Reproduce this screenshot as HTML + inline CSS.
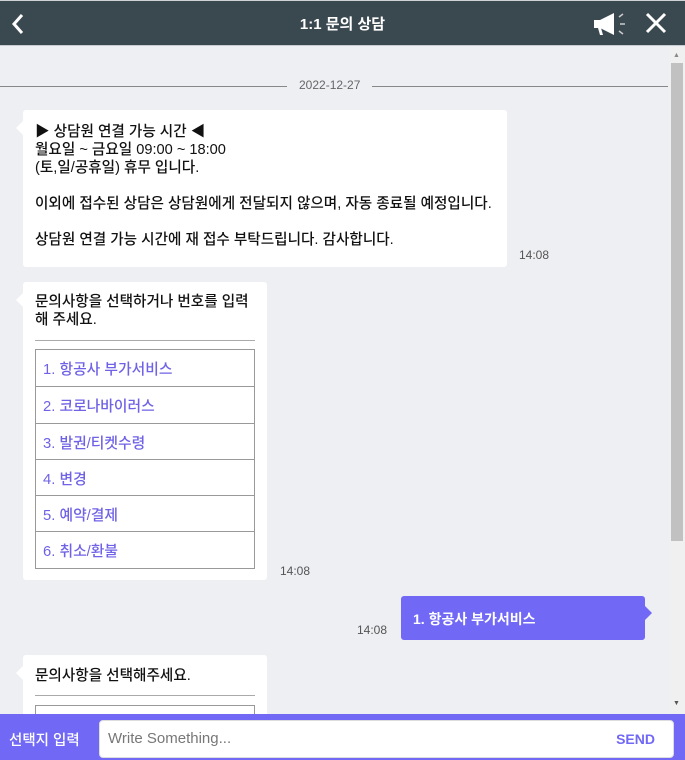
<!DOCTYPE html>
<html><head><meta charset="utf-8"><style>
*{margin:0;padding:0;box-sizing:border-box}
body{width:685px;height:760px;overflow:hidden;background:#eeeff3;font-family:"Liberation Sans","Noto Sans CJK KR",sans-serif;position:relative;color:#222}
.hdr{position:absolute;left:0;top:0;width:685px;height:46px;background:#3a4850;border-top:1px solid #cfd3d6;border-bottom:1px solid #c8ccd0}
.hdr .t{position:absolute;left:0;right:0;top:12px;text-align:center;color:#fff;font-size:15px;font-weight:bold}
.sb{position:absolute;left:669px;top:47px;width:16px;height:667px;background:#f0f0f0}
.thumb{position:absolute;left:671px;top:63px;width:12px;height:478px;background:#c1c1c1}
.date{position:absolute;top:86px;left:0;width:668px;height:1px;background:#888}
.dtxt{position:absolute;top:78px;left:287px;background:#eeeff3;padding:0 12px;font-size:12px;color:#666}
.b{position:absolute;background:#fff;border-radius:3px;font-size:14.6px;line-height:18px;color:#111;font-weight:500}
.b:before{content:"";position:absolute;left:-7px;top:11px;border:7px solid transparent;border-left:0;border-right-color:#fff}
.tm{position:absolute;font-size:12px;color:#555}
.lst{position:absolute;left:35px;top:349px;width:220px;border:1px solid #999}
.lst div{height:36.3px;border-top:1px solid #999;color:#6f62e6;font-size:14.8px;padding:8px 7px;font-weight:500}
.lst div:first-child{border-top:0}
.me{position:absolute;left:401px;top:596px;width:244px;height:44px;background:#7168f6;border-radius:3px;color:#fff;font-size:14px;font-weight:bold;padding:13px 12px}
.me:after{content:"";position:absolute;right:-7px;top:10px;border:7px solid transparent;border-right:0;border-left-color:#7168f6}
.ft{position:absolute;left:0;top:714px;width:685px;height:46px;background:#7168f6}
.inp{position:absolute;left:99px;top:720px;width:575px;height:38px;background:#fff;border-radius:4px;border:1px solid #ddd}
</style></head><body>
<div class="hdr">
<svg style="position:absolute;left:10px;top:12px" width="16" height="22" viewBox="0 0 16 22"><path d="M12 2 L4 11 L12 20" stroke="#fff" stroke-width="3" fill="none"/></svg>
<div class="t">1:1 문의 상담</div>
<svg style="position:absolute;left:592px;top:10px" width="38" height="26" viewBox="0 0 38 26"><path d="M2 9 h6 l14 -7 v22 l-14 -7 h-6z" fill="#fff"/><path d="M6 17 l2 7 h3 l-2 -7z" fill="#fff"/><path d="M27 6 l4 -3 M28 13 h5 M27 20 l4 3" stroke="#ccc" stroke-width="1.5"/></svg>
<svg style="position:absolute;left:645px;top:11px" width="22" height="22" viewBox="0 0 22 22"><path d="M2 2 L20 20 M20 2 L2 20" stroke="#fff" stroke-width="3"/></svg>
</div>
<div class="sb"></div><div class="thumb"></div>
<div style="position:absolute;left:673px;top:52px;font-size:7px;color:#888">▲</div>
<div style="position:absolute;left:673px;top:700px;font-size:7px;color:#555">▼</div>
<div class="date"></div><div class="dtxt">2022-12-27</div>
<div class="b" style="left:23px;top:110px;width:484px;height:157px;padding:13px 12px">▶ 상담원 연결 가능 시간 ◀<br>월요일 ~ 금요일 09:00 ~ 18:00<br>(토,일/공휴일) 휴무 입니다.<br><br>이외에 접수된 상담은 상담원에게 전달되지 않으며, 자동 종료될 예정입니다.<br><br>상담원 연결 가능 시간에 재 접수 부탁드립니다. 감사합니다.</div>
<div class="tm" style="left:519px;top:248px">14:08</div>
<div class="b" style="left:23px;top:282px;width:244px;height:298px;padding:11px 12px">문의사항을 선택하거나 번호를 입력<br>해 주세요.<div style="position:absolute;left:12px;top:58px;width:220px;height:1px;background:#aaa"></div></div>
<div class="lst"><div>1. 항공사 부가서비스</div><div>2. 코로나바이러스</div><div>3. 발권/티켓수령</div><div>4. 변경</div><div>5. 예약/결제</div><div>6. 취소/환불</div></div>
<div class="tm" style="left:280px;top:564px">14:08</div>
<div class="me">1. 항공사 부가서비스</div>
<div class="tm" style="left:357px;top:623px">14:08</div>
<div class="b" style="left:23px;top:655px;width:244px;height:70px;padding:12px 12px">문의사항을 선택해주세요.<div style="position:absolute;left:12px;top:40px;width:220px;height:1px;background:#aaa"></div><div style="position:absolute;left:12px;top:50px;width:220px;height:30px;border:1px solid #999"></div></div>
<div class="ft"><div style="position:absolute;left:9px;top:15px;color:#fff;font-size:14.5px;font-weight:500">선택지 입력</div></div>
<div class="inp"><span style="position:absolute;left:8px;top:9px;font-size:15px;color:#777">Write Something...</span><span style="position:absolute;right:18px;top:10px;font-size:14px;font-weight:bold;color:#7168f6">SEND</span></div>
</body></html>
